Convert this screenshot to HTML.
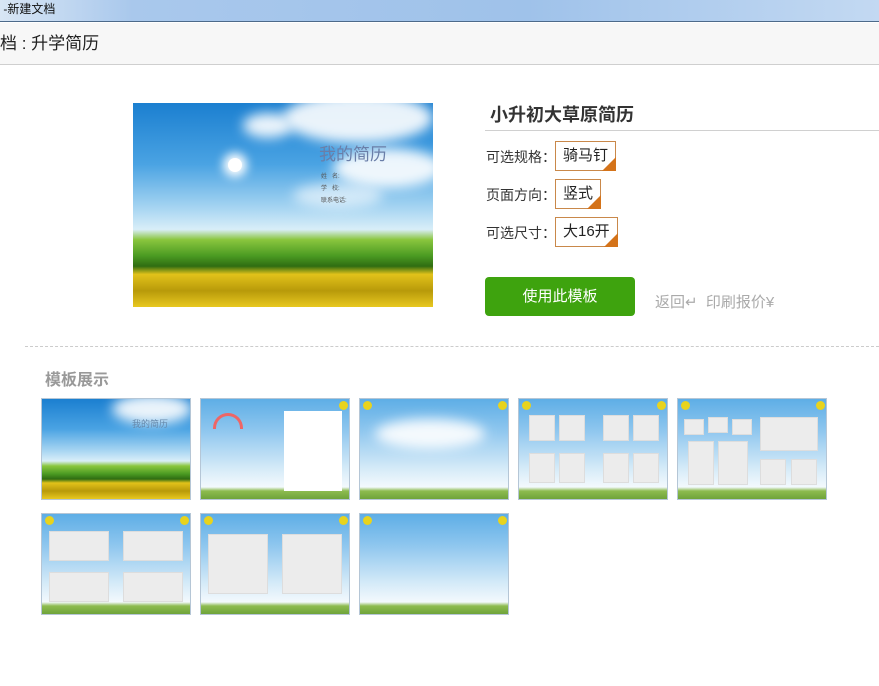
<!DOCTYPE html>
<html><head><meta charset="utf-8"><style>
*{margin:0;padding:0;box-sizing:border-box}
body{width:879px;height:686px;overflow:hidden;background:#fff;font-family:"Liberation Sans","Noto Sans CJK SC",sans-serif;position:relative}
.abs{position:absolute}
.titlebar{left:0;top:0;width:879px;height:22px;background:linear-gradient(90deg,#d8e6f5 0,#a9c8ec 15%,#9fc2ea 60%,#c3d9f2 100%);border-bottom:1px solid #4d6a8a;font-size:12px;line-height:18px;color:#111}
.hdr{left:0;top:23px;width:879px;height:42px;background:#f7f7f7;border-bottom:1px solid #cfcfcf;font-size:17px;line-height:42px;color:#222}
.cover{background:linear-gradient(180deg,#1b7fd0 0%,#4aa3e3 30%,#a9d6f2 52%,#d9eef8 62%,#8ac63e 67%,#4a9a22 75%,#2f6d12 80%,#e2c21a 84%,#b89a0a 92%,#e8c820 100%) !important;overflow:hidden}
.cloud{position:absolute;background:#fff;border-radius:50%;filter:blur(6px);opacity:.9}
.opt{font-size:14px;color:#333;left:486px}
.box{position:absolute;border:1px solid #c9884a;font-size:15px;color:#222;padding:0 7px;height:30px;line-height:28px;background:#fff}
.box:after{content:"";position:absolute;right:-1px;bottom:-1px;border-style:solid;border-width:0 0 14px 14px;border-color:transparent transparent #d4731a transparent}
.th{position:absolute;width:150px;height:102px;border:1px solid #b5c6d6;background:linear-gradient(180deg,#5eaee6 0%,#8cc5ee 30%,#d6ebf8 70%,#f3f9fd 88%,#8dbb4f 92%,#6fa33a 100%);overflow:hidden}
.ph{position:absolute;background:#ececec;border:1px solid #ddd}
.sun{position:absolute;top:2px;width:9px;height:9px;border-radius:50%;background:#e8d31e}
</style></head><body>
<div class="abs titlebar">&nbsp;-新建文档</div>
<div class="abs hdr">档 : 升学简历</div>

<div class="abs cover" style="left:133px;top:103px;width:300px;height:204px">
 <div class="cloud" style="left:150px;top:-10px;width:150px;height:50px"></div>
 <div class="cloud" style="left:200px;top:45px;width:110px;height:40px"></div>
 <div class="cloud" style="left:110px;top:10px;width:50px;height:25px"></div>
 <div class="cloud" style="left:160px;top:80px;width:90px;height:25px;opacity:.6"></div>
 <div class="abs" style="left:95px;top:55px;width:14px;height:14px;border-radius:50%;background:#fff;box-shadow:0 0 10px 5px #fff"></div>
 <div class="abs" style="left:186px;top:37px;font-size:17px;color:#6a7ea8">我的简历</div>
 <div class="abs" style="left:188px;top:68px;font-size:6px;line-height:12px;color:#555">姓 &nbsp;&nbsp;名:<br>学 &nbsp;&nbsp;校:<br>联系电话:</div>
</div>

<div class="abs" style="left:490px;top:101px;font-size:18px;font-weight:bold;color:#333">小升初大草原简历</div>
<div class="abs" style="left:485px;top:130px;width:394px;height:1px;background:#d0d0d0"></div>
<div class="abs opt" style="top:147px">可选规格：</div>
<div class="box" style="left:555px;top:141px">骑马钉</div>
<div class="abs opt" style="top:185px">页面方向：</div>
<div class="box" style="left:555px;top:179px">竖式</div>
<div class="abs opt" style="top:223px">可选尺寸：</div>
<div class="box" style="left:555px;top:217px">大16开</div>
<div class="abs" style="left:485px;top:277px;width:150px;height:39px;background:#3ea30e;border-radius:4px;color:#fff;font-size:15px;line-height:39px;text-align:center">使用此模板</div>
<div class="abs" style="left:655px;top:291px;font-size:15px;color:#aaa">返回↵ &nbsp;印刷报价¥</div>

<div class="abs" style="left:25px;top:346px;width:854px;border-top:1px dashed #ccc"></div>
<div class="abs" style="left:45px;top:366px;font-size:16px;font-weight:bold;color:#999">模板展示</div>

<div class="th cover" style="left:41px;top:398px"><div class="cloud" style="left:70px;top:-5px;width:80px;height:30px"></div><div class="abs" style="left:90px;top:18px;font-size:9px;color:#68a">我的简历</div></div>
<div class="th" style="left:200px;top:398px"><div class="abs" style="left:12px;top:14px;width:30px;height:16px;border-radius:16px 16px 0 0;border:3px solid #e66;border-bottom:none"></div><div class="abs" style="left:83px;top:12px;width:58px;height:80px;background:#fff"></div><div class="sun" style="left:138px"></div></div>
<div class="th" style="left:359px;top:398px"><div class="cloud" style="left:15px;top:20px;width:110px;height:30px"></div><div class="sun" style="left:3px"></div><div class="sun" style="left:138px"></div></div>
<div class="th" style="left:518px;top:398px"><div class="sun" style="left:3px"></div><div class="sun" style="left:138px"></div>
 <div class="ph" style="left:10px;top:16px;width:26px;height:26px"></div><div class="ph" style="left:40px;top:16px;width:26px;height:26px"></div><div class="ph" style="left:84px;top:16px;width:26px;height:26px"></div><div class="ph" style="left:114px;top:16px;width:26px;height:26px"></div>
 <div class="ph" style="left:10px;top:54px;width:26px;height:30px"></div><div class="ph" style="left:40px;top:54px;width:26px;height:30px"></div><div class="ph" style="left:84px;top:54px;width:26px;height:30px"></div><div class="ph" style="left:114px;top:54px;width:26px;height:30px"></div></div>
<div class="th" style="left:677px;top:398px"><div class="sun" style="left:3px"></div><div class="sun" style="left:138px"></div>
 <div class="ph" style="left:6px;top:20px;width:20px;height:16px"></div><div class="ph" style="left:30px;top:18px;width:20px;height:16px"></div><div class="ph" style="left:54px;top:20px;width:20px;height:16px"></div><div class="ph" style="left:82px;top:18px;width:58px;height:34px"></div>
 <div class="ph" style="left:10px;top:42px;width:26px;height:44px"></div><div class="ph" style="left:40px;top:42px;width:30px;height:44px"></div><div class="ph" style="left:82px;top:60px;width:26px;height:26px"></div><div class="ph" style="left:113px;top:60px;width:26px;height:26px"></div></div>

<div class="th" style="left:41px;top:513px"><div class="sun" style="left:3px"></div><div class="sun" style="left:138px"></div>
 <div class="ph" style="left:7px;top:17px;width:60px;height:30px"></div><div class="ph" style="left:81px;top:17px;width:60px;height:30px"></div><div class="ph" style="left:7px;top:58px;width:60px;height:30px"></div><div class="ph" style="left:81px;top:58px;width:60px;height:30px"></div></div>
<div class="th" style="left:200px;top:513px"><div class="sun" style="left:3px"></div><div class="sun" style="left:138px"></div>
 <div class="ph" style="left:7px;top:20px;width:60px;height:60px"></div><div class="ph" style="left:81px;top:20px;width:60px;height:60px"></div></div>
<div class="th" style="left:359px;top:513px"><div class="sun" style="left:3px"></div><div class="sun" style="left:138px"></div></div>
</body></html>
